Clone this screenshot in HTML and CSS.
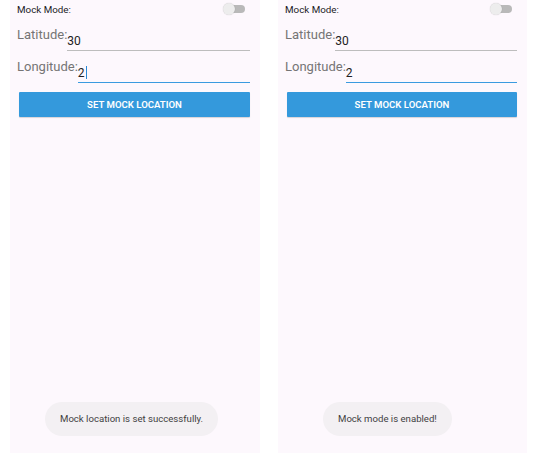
FILE: index.html
```html
<!DOCTYPE html>
<html lang="en">
<head>
  <meta charset="UTF-8">
  <title>Mock Location</title>
  <link rel="stylesheet" href="styles.css">
</head>
<body>

  <div class="screens">

    <div class="phone">
      <div class="mode-row">
        <span>Mock Mode:</span>
        <span class="switch"><span class="thumb"></span></span>
      </div>
      <div class="field">
        <label>Latitude:</label>
        <div class="value">30</div>
      </div>
      <div class="field">
        <label>Longitude:</label>
        <div class="value focused">2<span class="cursor"></span></div>
      </div>
      <button class="set-btn">SET MOCK LOCATION</button>
      <div class="toast toast-left">Mock location is set successfully.</div>
    </div>

    <div class="phone phone-right">
      <div class="mode-row">
        <span>Mock Mode:</span>
        <span class="switch"><span class="thumb"></span></span>
      </div>
      <div class="field">
        <label>Latitude:</label>
        <div class="value">30</div>
      </div>
      <div class="field">
        <label>Longitude:</label>
        <div class="value focused">2</div>
      </div>
      <button class="set-btn">SET MOCK LOCATION</button>
      <div class="toast toast-right">Mock mode is enabled!</div>
    </div>

  </div>

</body>
</html>
```

FILE: styles.css
```css
body {
  margin: 0;
  background: #fff;
  font-family: Roboto, "Liberation Sans", sans-serif;
}
.screens {
  display: flex;
  gap: 18px;
  padding-left: 10px;
}
.phone {
  width: 250px;
  height: 453px;
  background: #fdf8fd;
  display: flex;
  flex-direction: column;
  padding: 0 10px 0 7px;
  box-sizing: border-box;
}
.phone-right {
  width: 249px;
}
.mode-row {
  height: 18px;
  display: flex;
  align-items: center;
  justify-content: space-between;
  font-size: 9.8px;
  color: #1c1b1f;
}
.switch {
  position: relative;
  width: 22px;
  height: 12px;
  margin-right: 5px;
}
.switch::before {
  content: "";
  position: absolute;
  left: 6px;
  top: 2px;
  width: 16px;
  height: 8px;
  border-radius: 4px;
  background: #b9b9b9;
}
.thumb {
  position: absolute;
  left: 0;
  top: 0;
  width: 12px;
  height: 12px;
  border-radius: 50%;
  background: #ededed;
  box-shadow: 0 0 1px rgba(0,0,0,0.25);
}
.field {
  display: flex;
  height: 28px;
  margin-top: 5px;
}
.field + .field {
  margin-top: 4px;
}
.field label {
  font-size: 13px;
  line-height: 15px;
  margin-top: 4px;
  color: #757575;
}
.value {
  flex: 1;
  align-self: flex-end;
  font-size: 12px;
  line-height: 14px;
  padding-bottom: 2px;
  border-bottom: 1.5px solid #bdbdbd;
  color: #212121;
}
.value.focused {
  border-bottom-color: #3a9be0;
}
.cursor {
  display: inline-block;
  width: 1px;
  height: 13px;
  background: #2a8ad8;
  vertical-align: -2px;
  margin-left: 1px;
}
.set-btn {
  margin: 9px 0 0 2px;
  height: 25px;
  border: none;
  border-radius: 1px;
  background: #3499dc;
  color: #fff;
  font-family: Roboto, "Liberation Sans", sans-serif;
  font-size: 9.6px;
  font-weight: 600;
  box-shadow: 0 1px 1px rgba(0,0,0,0.15);
}
.toast {
  margin-top: auto;
  margin-bottom: 17px;
  align-self: flex-start;
  height: 34px;
  line-height: 34px;
  padding: 0 15px;
  border-radius: 17px;
  background: #f3f0f3;
  color: #3f3f3f;
  font-size: 9.6px;
}
.toast-left { margin-left: 28px; }
.toast-right { margin-left: 38px; }
```
